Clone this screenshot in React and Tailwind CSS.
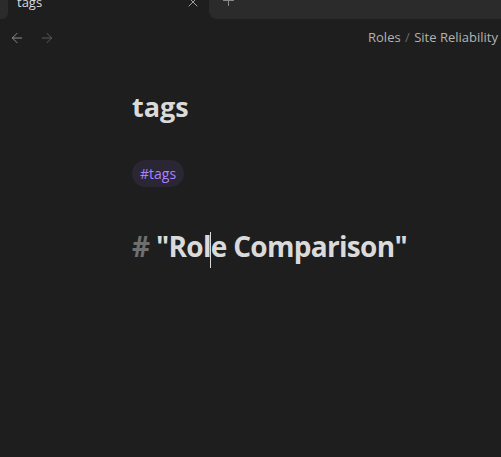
import React from 'react';
import { ArrowLeft, ArrowRight, X, Plus } from 'lucide-react';

const font = { fontFamily: '"Open Sans", "Noto Sans", sans-serif' };

const App = () => {
  return (
    <div className="w-[501px] h-[457px] overflow-hidden bg-[#1e1e1e] text-[#dadada]" style={font}>
      {/* Tab strip */}
      <div className="flex h-[19px] overflow-hidden bg-[#1e1e1e]">
        <div className="w-2 bg-[#2b2b2b] rounded-br-md" />
        <div className="w-[201px] flex items-end justify-between pl-[9px] pr-[8px] bg-[#1e1e1e]">
          <span className="text-[13px] leading-none -mb-[1px] text-[#dadada] relative -top-[11px]">tags</span>
          <X size={16} strokeWidth={1.5} className="text-[#a0a0a0] relative -top-[9px]" />
        </div>
        <div className="flex-1 bg-[#2b2b2b] rounded-bl-lg pl-[11px]">
          <Plus size={17} strokeWidth={1.5} className="text-[#8a8a8a] relative -top-[8px]" />
        </div>
      </div>

      {/* Nav bar */}
      <div className="h-[37px] flex items-center pl-[9px] pr-0">
        <ArrowLeft size={16} strokeWidth={1.5} className="text-[#8c8c8c]" />
        <ArrowRight size={16} strokeWidth={1.5} className="text-[#5a5a5a] ml-[14px]" />
        <div className="flex-1" />
        <div className="w-[133px] overflow-hidden whitespace-nowrap text-[13px] text-[#b3b3b3]">
          Roles <span className="text-[#6a6a6a] mx-[1px]">/</span> Site Reliability Engineer
        </div>
      </div>

      {/* Content */}
      <div className="pl-[132px] pt-[33px]">
        <h1 className="text-[27px] font-bold leading-[36px] text-[#dadada]">tags</h1>
        <div className="mt-[35px]">
          <span className="inline-block rounded-full bg-[#2a2633] px-[8px] py-[4px] text-[14px] leading-[19px] text-[#a882ff]">
            #tags
          </span>
        </div>
        <div className="mt-[41px] text-[28px] font-bold leading-[36px] tracking-[-0.7px] text-[#dadada] whitespace-nowrap">
          <span className="text-[#6f6f6f]">#</span> "Rol
          <span className="inline-block w-px h-[36px] bg-[#dadada] align-middle -mx-[0.5px]" />
          e Comparison"
        </div>
      </div>
    </div>
  );
};

export default App;
